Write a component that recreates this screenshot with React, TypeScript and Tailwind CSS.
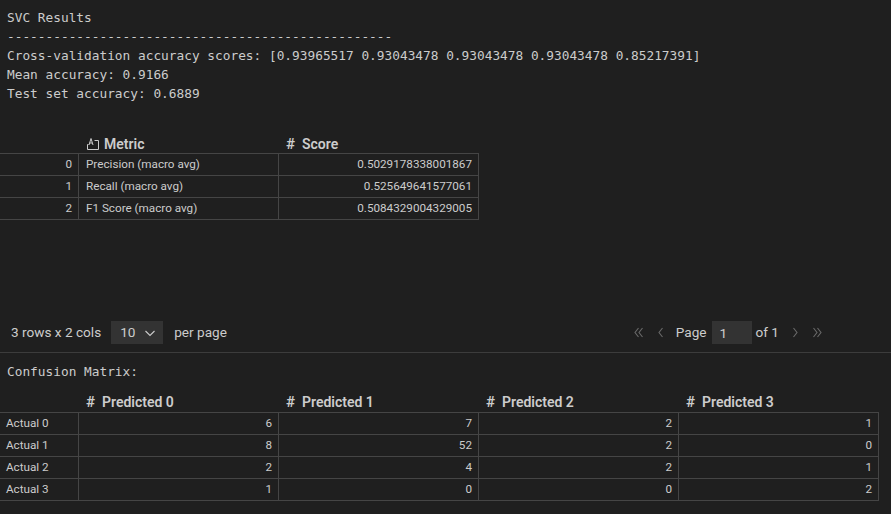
import React from "react";

const mono = { fontFamily: '"DejaVu Sans Mono", "Liberation Mono", monospace' };

function HashIcon() {
  return (
    <span className="inline-block w-[16px] text-[15px] font-semibold text-[#cccccc] leading-none">#</span>
  );
}

function StrIcon() {
  return (
    <svg width="14" height="14" viewBox="0 0 14 14" className="mr-[4px]" fill="none" stroke="#cccccc" strokeWidth="1">
      <path d="M1.5 12.5 V7.5 H2.5" />
      <path d="M8.5 3.5 H12.5 V12.5 H1.5" />
      <path d="M3 8 L5 1.5 L7 8 M3.7 6 H6.3" />
    </svg>
  );
}

function Header({ icon, label }: { icon: "hash" | "str"; label: string }) {
  return (
    <div className="flex items-center pl-[7px] h-full">
      {icon === "hash" ? <HashIcon /> : <StrIcon />}
      <span className="font-semibold text-[14px] text-[#cccccc]">{label}</span>
    </div>
  );
}

const metrics = [
  ["0", "Precision (macro avg)", "0.5029178338001867"],
  ["1", "Recall (macro avg)", "0.525649641577061"],
  ["2", "F1 Score (macro avg)", "0.5084329004329005"],
];

const cm = [
  ["Actual 0", 6, 7, 2, 1],
  ["Actual 1", 8, 52, 2, 0],
  ["Actual 2", 2, 4, 2, 1],
  ["Actual 3", 1, 0, 0, 2],
];

function ChevronDown() {
  return (
    <svg width="12" height="12" viewBox="0 0 12 12" fill="none" stroke="#cccccc" strokeWidth="1.1">
      <path d="M1.5 4 L6 8.5 L10.5 4" />
    </svg>
  );
}

function Chev({ dir, double }: { dir: "l" | "r"; double?: boolean }) {
  const d1 = dir === "l" ? "M5.5 2 L2 6.5 L5.5 11" : "M2.5 2 L6 6.5 L2.5 11";
  const d2 = dir === "l" ? "M9.5 2 L6 6.5 L9.5 11" : "M6.5 2 L10 6.5 L6.5 11";
  return (
    <svg width={double ? 12 : 8} height="13" viewBox={double ? "0 0 12 13" : "0 0 8 13"} fill="none" stroke="#6a6a6a" strokeWidth="1.1">
      <path d={d1} />
      {double && <path d={d2} />}
    </svg>
  );
}

export default function App() {
  const ui = { fontFamily: 'Roboto, "Noto Sans", sans-serif' };
  return (
    <div className="w-[891px] h-[514px] bg-[#1f1f1f] text-[#cccccc] overflow-hidden" style={ui}>
      <div className="pt-[8px] pl-[7px] text-[12.8px] leading-[19px] whitespace-pre" style={mono}>
        <div>SVC Results</div>
        <div>--------------------------------------------------</div>
        <div>Cross-validation accuracy scores: [0.93965517 0.93043478 0.93043478 0.93043478 0.85217391]</div>
        <div>Mean accuracy: 0.9166</div>
        <div>Test set accuracy: 0.6889</div>
      </div>

      <div className="mt-[31px] text-[11.7px]">
        <div className="flex h-[19px] pt-[1px]">
          <div className="w-[79px]" />
          <div className="w-[200px]"><Header icon="str" label="Metric" /></div>
          <div className="w-[200px]"><Header icon="hash" label="Score" /></div>
        </div>
        {metrics.map((r) => (
          <div key={r[0]} className="flex h-[22px] border-t border-[#454545] w-[479px]">
            <div className="w-[79px] border-r border-[#454545] pr-[6px] flex items-center justify-end">{r[0]}</div>
            <div className="w-[200px] border-r border-[#454545] pl-[7px] flex items-center">{r[1]}</div>
            <div className="w-[200px] border-r border-[#454545] pr-[6px] flex items-center justify-end">{r[2]}</div>
          </div>
        ))}
        <div className="border-t border-[#454545] w-[479px]" />
      </div>

      <div className="h-[101px]" />

      <div className="flex items-center h-[23px] text-[13.6px]">
        <span className="ml-[11px]">3 rows x 2 cols</span>
        <div className="ml-[10px] w-[52px] h-[23px] bg-[#333333] flex items-center pl-[9px] gap-[9px]">
          <span>10</span>
          <ChevronDown />
        </div>
        <span className="ml-[11px]">per page</span>
        <div className="ml-auto mr-[68px] flex items-center">
          <Chev dir="l" double />
          <span className="ml-[12px]"><Chev dir="l" /></span>
          <span className="ml-[11px]">Page</span>
          <div className="ml-[5px] w-[40px] h-[23px] bg-[#333333] pl-[8px] flex items-center pt-[2px]">1</div>
          <span className="ml-[4px]">of 1</span>
          <span className="ml-[12px]"><Chev dir="r" /></span>
          <span className="ml-[12px]"><Chev dir="r" double /></span>
        </div>
      </div>

      <div className="mt-[8px] border-t border-[#3c3c3c]" />

      <div className="pt-[9px] pl-[7px] text-[12.8px] leading-[19px]" style={mono}>Confusion Matrix:</div>

      <div className="mt-[11px] text-[11.7px]">
        <div className="flex h-[20px]">
          <div className="w-[79px]" />
          {["Predicted 0", "Predicted 1", "Predicted 2", "Predicted 3"].map((h) => (
            <div key={h} className="w-[200px]"><Header icon="hash" label={h} /></div>
          ))}
        </div>
        {cm.map((r) => (
          <div key={r[0] as string} className="flex h-[22px] border-t border-[#454545] w-[879px]">
            <div className="w-[79px] border-r border-[#454545] pl-[6px] flex items-center">{r[0]}</div>
            {r.slice(1).map((v, i) => (
              <div key={i} className="w-[200px] border-r border-[#454545] pr-[6px] flex items-center justify-end">{v}</div>
            ))}
          </div>
        ))}
        <div className="border-t border-[#454545] w-[879px]" />
      </div>
    </div>
  );
}
